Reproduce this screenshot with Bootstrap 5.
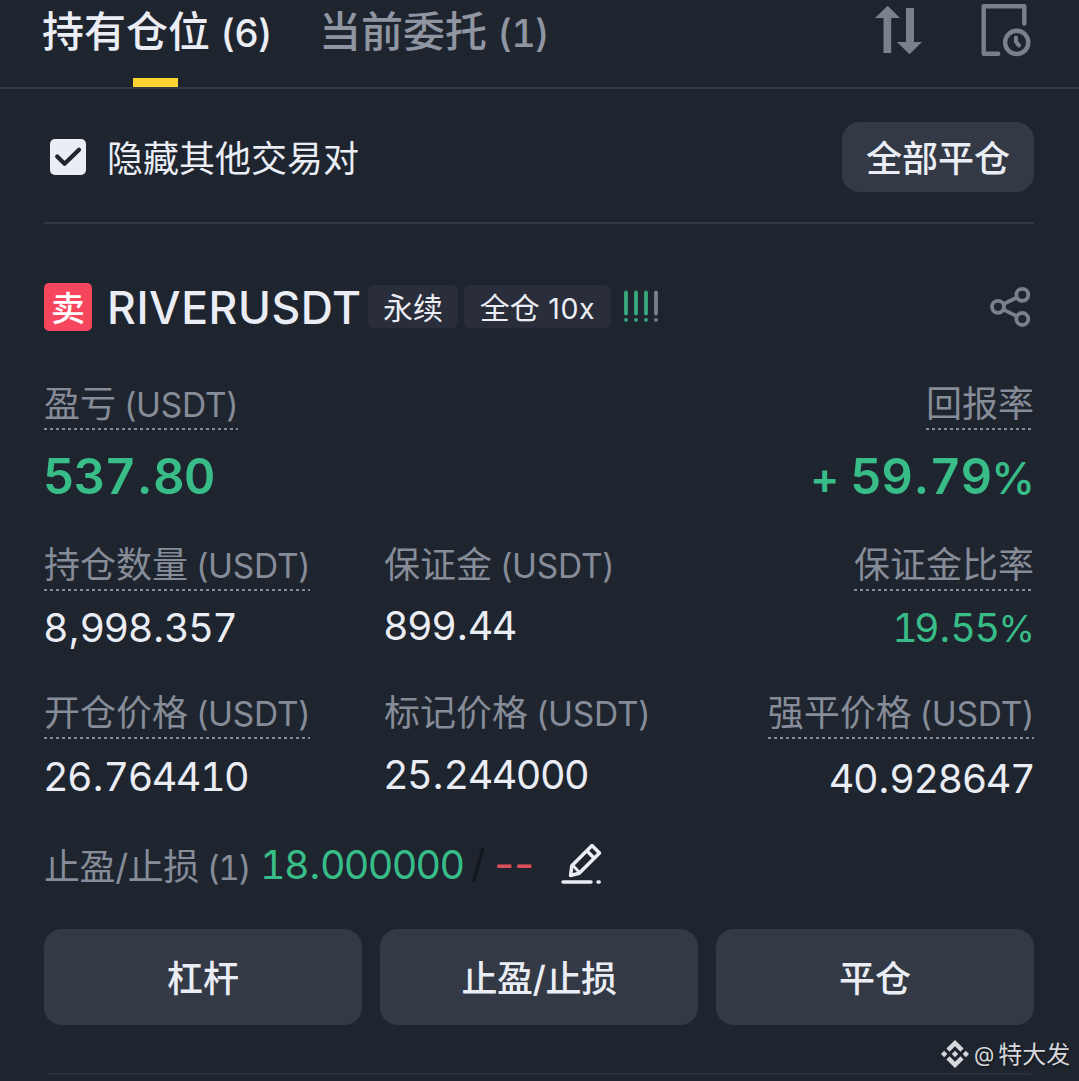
<!DOCTYPE html>
<html lang="zh-CN" data-bs-theme="dark">
<head>
<meta charset="utf-8">
<meta name="viewport" content="width=device-width, initial-scale=1">
<title>持有仓位</title>
<link href="https://cdn.jsdelivr.net/npm/bootstrap@5.3.0/dist/css/bootstrap.min.css" rel="stylesheet">
<style>
:root{--ink:#ebedf5;--dim:#868c98;--icon:#7a808c;--up:#38bd88;--down:#d94f5c;--line:#333a45;--btn:#333a45}
body{margin:0;background:#1f252f;color:var(--ink);font-family:Inter,"Noto Sans CJK SC",sans-serif;width:1079px;height:1081px;overflow:hidden}
svg{display:block;flex:none}
.tabs-bar{height:89px;border-bottom:2px solid var(--line);padding:0 48px 0 42px}
.tab-item{position:relative;height:87px;line-height:64px;font-size:42px;font-weight:500;white-space:nowrap;color:#8f95a1}
.tab-item.active{color:var(--ink);width:277px}
.tab-item.active::after{content:"";position:absolute;left:91px;bottom:0;width:45px;height:9px;background:#fcd535}
.tab-item .lat{font-size:38px;font-variant-numeric:tabular-nums;letter-spacing:-.9px;margin-left:-1px}
.page-body{padding:0 45px 0 44px}
.filter-row{height:135px;border-bottom:2px solid var(--line);padding:33px 0 0 6px}
.filter-label{font-size:36px;line-height:74px;margin-left:21px}
.act{background:var(--btn);color:var(--ink);border:0;border-radius:18px;font-size:36px;font-weight:500;padding:0;line-height:74px}
.act-all{width:192px;height:70px;overflow:hidden}
.head-row{height:48px;margin-top:59px}
.side-tag{width:48px;height:48px;line-height:51px;border-radius:5px;background:#f6465d;color:#fff;font-size:34px;font-weight:500;text-align:center}
.pair{font-size:44.5px;font-weight:500;line-height:51px;margin-left:15px;width:261px;white-space:nowrap;letter-spacing:.55px}
.chip{height:43px;line-height:46px;border-radius:6px;background:#292e3a;font-size:30px;text-align:center;white-space:nowrap}
.chip .lat{font-size:28.5px;letter-spacing:.6px}
.lab{display:inline-block;height:49px;line-height:46px;font-size:36px;color:var(--dim);white-space:nowrap}
.lab .lat{font-size:33.5px;letter-spacing:-.25px;margin-left:-2px}
.dotted{background:repeating-linear-gradient(90deg,var(--dim) 0 3px,transparent 3px 6px) left bottom/100% 2px no-repeat}
.val{line-height:49px;height:48px;font-size:39.5px;white-space:nowrap;font-variant-numeric:tabular-nums;letter-spacing:-1.5px;margin-left:-1px}
.dot{margin:0 1.6px}
.big{line-height:61px;height:60px;font-size:49px;font-weight:600;white-space:nowrap;color:var(--up);margin-top:16px;margin-left:-1px;font-variant-numeric:tabular-nums;letter-spacing:-.9px}
.big .dot{margin:0 2.7px}
.pct{font-size:.94em;letter-spacing:0;margin-right:-1px}
.big .pct{font-weight:500;font-size:.9em}
.up{color:var(--up)}
.col-a{width:340px}
.stop-row{height:60px;margin-top:33px;line-height:60px;font-size:36px;white-space:nowrap}
.acts{gap:18px;margin-top:34px}
.acts .act{height:96px;line-height:100px;flex:1;overflow:hidden}
.foot{margin:48px 3px 0;height:2px;background:#2b313c}
.sign{position:absolute;left:941px;top:1036px;height:36px;line-height:38px;font-size:24px;color:#d6d8db;text-shadow:1px 1px 2px #0008;white-space:nowrap}
</style>
</head>
<body>
<header class="tabs-bar d-flex">
  <div class="tab-item active">持有仓位 <span class="lat">(6)</span></div>
  <div class="tab-item">当前委托 <span class="lat">(1)</span></div>
  <svg class="ms-auto" width="156" height="60" viewBox="875 0 156 60" fill="none">
    <path fill="#7a808c" d="M887.7 5.7 900 18h-8.800v35h-7.700V18H875zM906 8h8v34h8l-12.500 12.300L897 42h9z"/>
    <g stroke="#7a808c" stroke-width="4.400" stroke-linecap="round" stroke-linejoin="round">
      <path d="M1024.300 23.500V6.300h-40.600v47.400h14.500"/>
      <circle cx="1016.700" cy="42.400" r="11.600"/><path stroke-width="4" d="M1016 37.500v4.200l3 3.800"/>
    </g>
  </svg>
</header>
<main class="page-body">
  <div class="filter-row d-flex">
    <svg width="36" height="36" viewBox="0 0 36 36" style="margin-top:17px"><rect width="36" height="36" rx="5" fill="#ebedf5"/><path d="M7.200 17.500l7.400 7.300L29 10.700" fill="none" stroke="#1f252f" stroke-width="4.200" stroke-linecap="round" stroke-linejoin="round"/></svg>
    <div class="filter-label">隐藏其他交易对</div>
    <button class="btn act act-all ms-auto">全部平仓</button>
  </div>

  <div class="head-row d-flex">
    <div class="side-tag">卖</div>
    <div class="pair">RIVERUSDT</div>
    <div class="d-flex" style="margin-top:2px;gap:6px">
      <div class="chip" style="width:90px">永续</div>
      <div class="chip" style="width:147px">全仓 <span class="lat">10x</span></div>
    </div>
    <svg width="40" height="48" viewBox="620 283 40 48" style="margin-left:9px" stroke-width="3.800" stroke-linecap="round">
      <path stroke="#38a97c" d="M626 292.500v21M636 292.500v21M646 292.500v21M626 319.800v.1M636 319.800v.1M646 319.800v.1"/>
      <path stroke="#7a808c" d="M656 292.500v21M656 319.800v.1"/>
    </svg>
    <svg class="ms-auto" width="45" height="48" viewBox="989 283 45 48" fill="none" stroke="#7a808c" stroke-width="3.800">
      <circle cx="998" cy="306.800" r="6"/><circle cx="1022.300" cy="294.800" r="6"/><circle cx="1022.300" cy="319" r="6"/>
      <path d="M1003.500 304l13.400-6.500M1003.500 309.600l13.400 6.600"/>
    </svg>
  </div>

  <div class="d-flex justify-content-between" style="margin-top:50px">
    <div><div class="lab dotted">盈亏 <span class="lat">(USDT)</span></div><div class="big">537<span class="dot">.</span>80</div></div>
    <div class="d-flex flex-column align-items-end"><div class="lab dotted">回报率</div><div class="big"><span style="font-size:44px">+</span> 59<span class="dot">.</span>79<span class="pct">%</span></div></div>
  </div>

  <div class="d-flex" style="margin-top:36px">
    <div class="col-a"><div class="lab dotted">持仓数量 <span class="lat">(USDT)</span></div><div class="val" style="margin-top:13px">8<span class="dot">,</span>998<span class="dot">.</span>357</div></div>
    <div><div class="lab">保证金 <span class="lat">(USDT)</span></div><div class="val" style="margin-top:11px">899<span class="dot">.</span>44</div></div>
    <div class="ms-auto text-end"><div class="lab dotted">保证金比率</div><div class="val up" style="margin-top:13px"><span style="letter-spacing:-4px">1</span>9<span class="dot">.</span>55<span class="pct">%</span></div></div>
  </div>

  <div class="d-flex" style="margin-top:38px;height:112px">
    <div class="col-a"><div class="lab dotted">开仓价格 <span class="lat">(USDT)</span></div><div class="val" style="margin-top:14px">26<span class="dot">.</span>764410</div></div>
    <div><div class="lab">标记价格 <span class="lat">(USDT)</span></div><div class="val" style="margin-top:12px">25<span class="dot">.</span>244000</div></div>
    <div class="ms-auto text-end"><div class="lab dotted">强平价格 <span class="lat">(USDT)</span></div><div class="val" style="margin-top:16px">40<span class="dot">.</span>928647</div></div>
  </div>

  <div class="stop-row d-flex">
    <div class="lab" style="line-height:64px;width:217px;letter-spacing:-.4px">止盈/止损 <span class="lat" style="font-variant-numeric:tabular-nums;letter-spacing:-1.500px">(1)</span></div>
    <div class="val up" style="line-height:61px;width:212px;letter-spacing:-1.700px">18<span class="dot">.</span>000000</div>
    <div class="val" style="line-height:58px;width:24px;color:#12161d">/</div>
    <div class="val" style="line-height:58px;width:38px;font-size:44px;font-variant-numeric:normal;letter-spacing:-.3px;color:var(--down)">--</div>
    <svg width="42" height="44" viewBox="561 842 42 44" style="margin:7px 0 0 29px" fill="none" stroke="#ebedf5" stroke-width="3.500" stroke-linecap="round" stroke-linejoin="round">
      <path d="M592 845.500l7.500 7.500-20.300 20.300-8.600 2.200 1.200-9.700zM586.800 850.700l7.500 7.500"/><path stroke-width="2.800" d="M572.500 865l6 6.500"/>
      <path d="M563 882h28M598 882h1.200"/>
    </svg>
  </div>

  <div class="acts d-flex">
    <button class="btn act">杠杆</button>
    <button class="btn act" style="letter-spacing:-.5px">止盈/止损</button>
    <button class="btn act">平仓</button>
  </div>
  <div class="foot"></div>
</main>
<div class="sign d-flex">
  <svg width="28" height="28" viewBox="0 0 126.600 126.600" style="margin:4px 5px 0 0" fill="#d6d8db"><path d="M38.700 53.200l24.600-24.600 24.600 24.600 14.300-14.300L63.300 0 24.400 38.900zM0 63.300l14.300-14.300 14.300 14.300-14.300 14.300zM38.700 73.400l24.600 24.600 24.600-24.600 14.300 14.300-38.900 38.900-38.900-38.900zM98 63.300l14.300-14.300 14.300 14.300-14.300 14.300zM77.800 63.300L63.300 48.800 48.800 63.300l14.500 14.500z"/></svg>
  <span style="font-size:21px">@</span><span style="margin-left:4px">特大发</span>
</div>
<script src="https://cdn.jsdelivr.net/npm/bootstrap@5.3.0/dist/js/bootstrap.bundle.min.js"></script>
</body>
</html>
